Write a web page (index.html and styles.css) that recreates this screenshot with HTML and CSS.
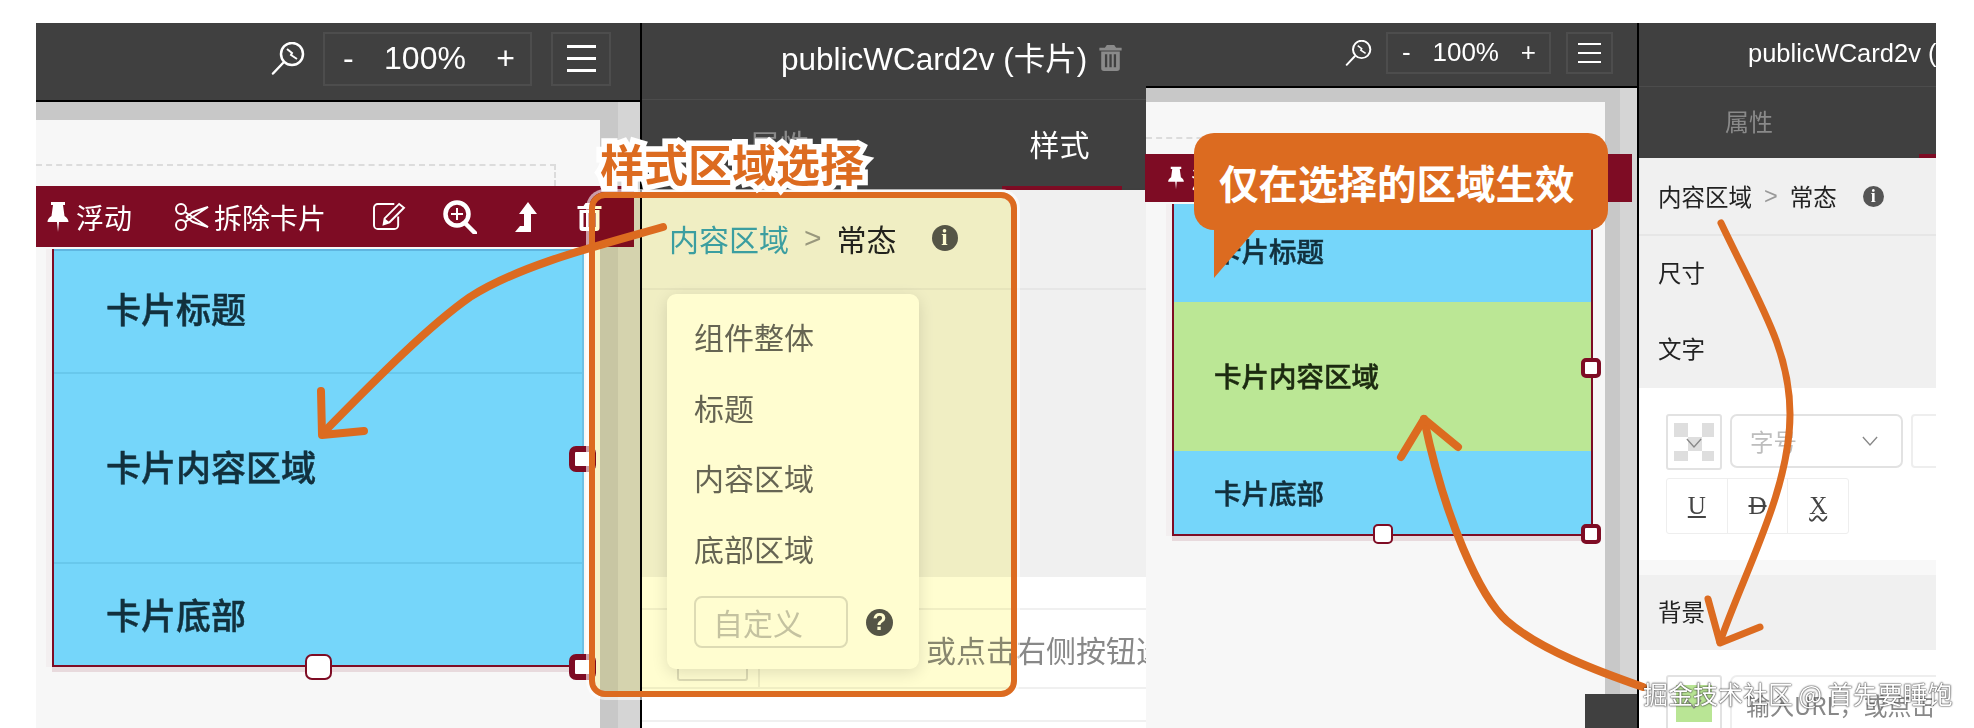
FILE: index.html
```html
<!DOCTYPE html>
<html lang="zh-CN">
<head>
    <meta charset="UTF-8">
    <title>publicWCard2v 样式区域选择</title>
    <link rel="stylesheet" href="styles.css">
</head>
<body>
    <svg class="defs" width="0" height="0">
        <symbol id="i-pin" viewBox="0 0 24 30"><path d="M5 0h14v3h-2l1.500 11c2.500 1.500 4 3.500 4 6H13l-1 10-1-10H1.500c0-2.500 1.500-4.500 4-6L7 3H5z" fill="currentColor"/></symbol>
        <symbol id="i-scissors" viewBox="0 0 36 30"><g fill="none" stroke="currentColor" stroke-width="2"><circle cx="8" cy="7" r="5"/><circle cx="8" cy="23" r="5"/><path d="M12 10l23 15-15-5-7-5M12 20l23-15-15 5-7 5"/></g></symbol>
        <symbol id="i-edit" viewBox="0 0 34 30"><path d="M23 2H6a4 4 0 0 0-4 4v18a4 4 0 0 0 4 4h17a4 4 0 0 0 4-4V15" fill="none" stroke="currentColor" stroke-width="2"/><path d="M28 2l5 4-15 15-6 2 1-6z" fill="none" stroke="currentColor" stroke-width="2"/><path d="M13 17l5 4-6 2z" fill="currentColor"/></symbol>
        <symbol id="i-zoom" viewBox="0 0 34 34"><circle cx="14" cy="14" r="11.500" fill="none" stroke="currentColor" stroke-width="4.500"/><path d="M14 8v12M8 14h12" stroke="currentColor" stroke-width="2"/><path d="M22 23l10 10" stroke="currentColor" stroke-width="4.500" stroke-linecap="round"/></symbol>
        <symbol id="i-up" viewBox="0 0 22 30"><path d="M13 0l9 12h-6v18H0l5-6h4V12H4z" fill="currentColor"/></symbol>
        <symbol id="i-trash" viewBox="0 0 24 28"><path fill-rule="evenodd" d="M8 0h8l2 3h6v3H0V3h6zM2 7h20v18a3 3 0 0 1-3 3H5a3 3 0 0 1-3-3zM6 10v14h2.500V10zM10.800 10v14h2.500V10zM15.500 10v14H18V10z" fill="currentColor"/></symbol>
        <symbol id="i-loupe" viewBox="0 0 34 33"><g fill="none" stroke="currentColor"><circle cx="21" cy="12" r="11" stroke-width="2.500"/><path d="M12 21L2 31.500" stroke-width="2.500" stroke-linecap="round"/><path d="M16 7l5 4-1 2 6 4" stroke-width="2"/></g></symbol>
        <symbol id="i-chevron" viewBox="0 0 18 12"><path d="M1 1l8 9 8-9" fill="none" stroke="currentColor" stroke-width="1.500"/></symbol>
    </svg>

    <div class="stage">
        <!-- first shot: whole card selected -->
        <section class="editor editor-a">
            <div class="topbar">
                <svg class="loupe"><use href="#i-loupe"/></svg>
                <div class="zoom-box"><span class="zoom-sign">-</span><span>100%</span><span class="zoom-sign">+</span></div>
                <div class="menu-box"><i></i><i></i><i></i></div>
            </div>
            <div class="workspace">
                <div class="page">
                    <div class="dash"></div>
                    <div class="toolbar">
                        <svg class="t-pin"><use href="#i-pin"/></svg><span class="t-label">浮动</span>
                        <svg class="t-scissors"><use href="#i-scissors"/></svg><span class="t-label">拆除卡片</span>
                        <svg class="t-edit"><use href="#i-edit"/></svg>
                        <svg class="t-zoom"><use href="#i-zoom"/></svg>
                        <svg class="t-up"><use href="#i-up"/></svg>
                        <svg class="t-trash"><use href="#i-trash"/></svg>
                    </div>
                    <div class="card">
                        <div class="card-row row-head">卡片标题</div>
                        <div class="card-row row-body">卡片内容区域</div>
                        <div class="card-row row-foot">卡片底部</div>
                        <span class="handle handle-side"></span>
                        <span class="handle handle-mid"></span>
                        <span class="handle handle-corner"></span>
                    </div>
                </div>
            </div>
        </section>

        <section class="panel panel-a">
            <div class="panel-title">publicWCard2v (卡片)<svg class="title-trash"><use href="#i-trash"/></svg></div>
            <div class="tabs"><span class="tab">属性</span><span class="tab tab-on">样式</span></div>
            <div class="crumbs">
                <span class="crumb-link">内容区域</span><span class="crumb-sep">&gt;</span><span>常态</span><span class="dot-icon dot-info">i</span>
            </div>
            <div class="panel-grey"></div>
            <div class="url-gap"></div>
            <div class="url-row">
                <div class="url-swatch"></div>
                <div class="url-input">输入URL，或点击右侧按钮选择图片</div>
            </div>
            <div class="url-row-end"></div>

            <div class="dropdown">
                <div class="drop-item">组件整体</div>
                <div class="drop-item">标题</div>
                <div class="drop-item">内容区域</div>
                <div class="drop-item">底部区域</div>
                <div class="drop-custom">
                    <div class="drop-input">自定义</div>
                    <span class="dot-icon dot-help">?</span>
                </div>
            </div>
        </section>

        <!-- second shot: only the content area changes -->
        <section class="editor editor-b">
            <div class="topbar">
                <svg class="loupe"><use href="#i-loupe"/></svg>
                <div class="zoom-box"><span class="zoom-sign">-</span><span>100%</span><span class="zoom-sign">+</span></div>
                <div class="menu-box"><i></i><i></i><i></i></div>
            </div>
            <div class="workspace">
                <div class="page">
                    <div class="dash"></div>
                    <div class="toolbar">
                        <svg class="t-pin"><use href="#i-pin"/></svg><span class="t-label">浮动</span>
                    </div>
                    <div class="card">
                        <div class="card-row row-head">卡片标题</div>
                        <div class="card-row row-body">卡片内容区域</div>
                        <div class="card-row row-foot">卡片底部</div>
                        <span class="handle handle-side"></span>
                        <span class="handle handle-mid"></span>
                        <span class="handle handle-corner"></span>
                    </div>
                </div>
                <div class="corner-block"></div>
            </div>
        </section>

        <section class="panel panel-b">
            <div class="panel-title">publicWCard2v (卡片)</div>
            <div class="tabs"><span class="tab">属性</span><span class="tab tab-on">样式</span></div>
            <div class="crumbs">
                <span>内容区域</span><span class="crumb-sep">&gt;</span><span>常态</span><span class="dot-icon dot-info">i</span>
            </div>
            <div class="prop-row">尺寸</div>
            <div class="prop-row">文字</div>
            <div class="text-controls">
                <div class="control-line">
                    <div class="swatch-box"><div class="checker"></div><svg class="chev"><use href="#i-chevron"/></svg></div>
                    <div class="size-select"><span>字号</span><svg class="chev"><use href="#i-chevron"/></svg></div>
                    <div class="next-box">字</div>
                </div>
                <div class="deco-group">
                    <span class="deco deco-u">U</span>
                    <span class="deco deco-d">D</span>
                    <span class="deco deco-x">X</span>
                </div>
            </div>
            <div class="prop-gap"></div>
            <div class="prop-row prop-bg">背景</div>
            <div class="bg-line">
                <div class="swatch-box"><div class="green-swatch"></div><svg class="chev"><use href="#i-chevron"/></svg></div>
                <div class="bg-input">输入URL，或点击右侧按钮选择图片</div>
            </div>
        </section>

        <!-- annotations drawn over the shots -->
        <div class="select-frame"></div>
        <svg class="arrows" viewBox="0 0 1974 728">
            <g fill="none" stroke="#dc6b20" stroke-linecap="round" stroke-linejoin="round">
                <g stroke-width="8">
                    <path d="M663 227C600 245 520 265 470 297C430 325 380 375 324 432"/>
                    <path d="M321 391L322 435L364 431"/>
                    <path d="M1643 687C1600 672 1540 650 1507 621C1480 597 1445 520 1424 419"/>
                    <path d="M1401 457L1424 419L1458 447"/>
                </g>
                <g stroke-width="7">
                    <path d="M1721 223C1760 305 1790 350 1790 414C1790 490 1745 570 1720 642"/>
                    <path d="M1708 599L1720 643L1760 627"/>
                </g>
            </g>
        </svg>
        <div class="select-label">样式区域选择</div>
        <div class="bubble">仅在选择的区域生效</div>
        <div class="watermark">掘金技术社区 @ 首先要睡饱</div>
    </div>
</body>
</html>
```

FILE: styles.css
```css
* {
    box-sizing: border-box;
}
body {
    margin: 0;
    background: #fff;
    font-family: "Liberation Sans", "Noto Sans CJK SC", sans-serif;
}
.defs {
    position: absolute;
}
.stage {
    position: relative;
    display: flex;
    width: 1974px;
    height: 728px;
    padding: 23px 0 0 36px;
    overflow: hidden;
    background: #fff;
}

/* editor shots */
.editor {
    display: flex;
    flex-direction: column;
    flex: none;
    border-right: 2px solid #000;
}
.editor-a {
    width: 606px;
}
.editor-b {
    width: 493px;
}
.topbar {
    display: flex;
    justify-content: flex-end;
    align-items: center;
    background: #404040;
    border-bottom: 2px solid #000;
    color: #fff;
}
.editor-a .topbar {
    height: 79px;
    padding-right: 29px;
    padding-bottom: 6px;
}
.editor-b .topbar {
    height: 65px;
    padding-right: 24px;
    padding-bottom: 4px;
}
.loupe {
    flex: none;
}
.editor-a .loupe {
    width: 34px;
    height: 33px;
    margin-right: 18px;
}
.editor-b .loupe {
    width: 27px;
    height: 26px;
    margin-right: 14px;
}
.zoom-box {
    display: flex;
    justify-content: space-between;
    align-items: center;
    border: 2px solid #4d4d4d;
}
.editor-a .zoom-box {
    width: 209px;
    height: 54px;
    padding: 0 15px 0 18px;
    font-size: 32px;
}
.editor-b .zoom-box {
    width: 165px;
    height: 42px;
    padding: 0 13px 0 14px;
    font-size: 26px;
}
.menu-box {
    display: flex;
    flex-direction: column;
    justify-content: center;
    align-items: center;
    border: 2px solid #4d4d4d;
}
.menu-box i {
    display: block;
    height: 2px;
    background: #fff;
}
.editor-a .menu-box {
    width: 60px;
    height: 54px;
    margin-left: 19px;
    gap: 9px;
}
.editor-a .menu-box i {
    width: 29px;
    height: 3px;
}
.editor-b .menu-box {
    width: 47px;
    height: 42px;
    margin-left: 15px;
    gap: 7px;
}
.editor-b .menu-box i {
    width: 23px;
}
.workspace {
    position: relative;
    flex: 1;
    min-height: 0;
    background: #c8c8c8;
}
.editor-a .workspace {
    padding-top: 18px;
    background: linear-gradient(to right, #c8c8c8 582px, #d5d5d5 582px);
}
.editor-b .workspace {
    padding-top: 14px;
    background: linear-gradient(to right, #c8c8c8 474px, #d5d5d5 474px);
}
.page {
    height: 100%;
    background: #f7f7f7;
}
.editor-a .page {
    width: 564px;
    padding-top: 44px;
}
.editor-b .page {
    width: 459px;
    padding-top: 35px;
}
.dash {
    border-top: 2px dashed #dcdcdc;
    border-right: 2px dashed #dcdcdc;
}
.editor-a .dash {
    width: 520px;
    height: 22px;
}
.editor-b .dash {
    width: 440px;
    height: 17px;
}
.toolbar {
    display: flex;
    align-items: center;
    background: #7e0c24;
    color: #fff;
    white-space: nowrap;
}
.editor-a .toolbar {
    width: 598px;
    height: 61px;
    padding-left: 10px;
}
.editor-b .toolbar {
    width: 487px;
    height: 48px;
    margin-left: -1px;
    padding-left: 22px;
}
.t-label {
    font-size: 28px;
    color: #fff;
}
.editor-b .t-label {
    font-size: 22px;
}
.t-pin {
    width: 24px;
    height: 30px;
    margin-right: 6px;
}
.editor-b .t-pin {
    width: 18px;
    height: 24px;
}
.t-scissors {
    width: 36px;
    height: 30px;
    margin: 0 5px 0 41px;
}
.t-edit {
    width: 35px;
    height: 29px;
    margin-left: 45px;
}
.t-zoom {
    width: 34px;
    height: 34px;
    margin-left: 37px;
}
.t-up {
    width: 22px;
    height: 30px;
    margin-left: 38px;
}
.t-trash {
    width: 27px;
    height: 28px;
    margin-left: 39px;
}

/* card with its three areas */
.card {
    position: relative;
    margin-top: 2px;
    border-left: 2px solid #7e0c24;
    border-bottom: 2px solid #7e0c24;
    border-right: 2px solid #6cc0e4;
    box-shadow: 0 5px 0 rgba(126, 12, 36, 0.12), -6px 0 0 rgba(126, 12, 36, 0.03);
    font-family: "Noto Sans CJK SC", sans-serif;
    font-weight: 500;
    color: #12303d;
    -webkit-text-stroke: 0.5px currentColor;
}
.editor-a .card {
    width: 532px;
    height: 418px;
    margin-left: 16px;
    font-size: 35px;
}
.editor-b .card {
    width: 421px;
    height: 332px;
    margin-left: 26px;
    border-right-color: #7e0c24;
    font-size: 27.500px;
}
.card-row {
    display: flex;
    align-items: center;
    background: #75d6fa;
}
.editor-a .card-row {
    padding-left: 52px;
    border-top: 2px solid #68c8ec;
}
.editor-b .card-row {
    padding-left: 40px;
}
.editor-a .row-head {
    height: 123px;
    padding-bottom: 8px;
    border-top-color: #5fb6e0;
}
.editor-a .row-body {
    height: 190px;
    padding-bottom: 6px;
}
.editor-a .row-foot {
    height: 103px;
    padding-bottom: 2px;
}
.editor-b .row-head {
    height: 98px;
    padding-bottom: 6px;
}
.editor-b .row-body {
    height: 149px;
    padding-bottom: 4px;
    background: #bbe795;
    color: #1c2a10;
}
.editor-b .row-foot {
    height: 83px;
    padding-bottom: 2px;
}
.handle {
    position: absolute;
    background: #fff;
    border-style: solid;
    border-color: #7e0c24;
}
.editor-a .handle {
    width: 27px;
    height: 26px;
    border-width: 6px;
    border-radius: 7px;
}
.editor-b .handle {
    width: 20px;
    height: 20px;
    border-width: 4.500px;
    border-radius: 5px;
}
.editor-a .handle-side {
    right: -14px;
    top: 197px;
}
.editor-a .handle-corner {
    right: -14px;
    bottom: -15px;
}
.editor-a .handle.handle-mid {
    left: 251px;
    bottom: -15px;
    border-width: 2px;
}
.editor-b .handle-side {
    right: -10px;
    top: 154px;
}
.editor-b .handle-corner {
    right: -10px;
    bottom: -10px;
}
.editor-b .handle.handle-mid {
    left: 199px;
    bottom: -10px;
    border-width: 2px;
}
.corner-block {
    position: absolute;
    right: 0;
    bottom: 0;
    width: 52px;
    height: 34px;
    background: #404040;
}

/* property panels */
.panel {
    position: relative;
    display: flex;
    flex-direction: column;
    flex: none;
    overflow: hidden;
    font-family: "Noto Sans CJK SC", sans-serif;
    background: #fff;
}
.panel-a {
    width: 504px;
    height: 705px;
}
.panel-b {
    width: 297px;
    height: 705px;
}
.panel-title {
    display: flex;
    align-items: center;
    flex: none;
    background: #404040;
    border-bottom: 1px solid #4c4c4c;
    color: #fff;
    white-space: nowrap;
    font-family: "Liberation Sans", "Noto Sans CJK SC", sans-serif;
}
.panel-a .panel-title {
    height: 77px;
    padding: 0 0 10px 139px;
    font-size: 31.500px;
}
.panel-b .panel-title {
    height: 64px;
    padding: 0 0 8px 109px;
    font-size: 25.500px;
}
.title-trash {
    width: 23px;
    height: 26px;
    margin: 3px 0 0 12px;
    color: #8a8a8a;
}
.tabs {
    display: flex;
    flex: none;
    background: #404040;
    color: #8a8a8a;
}
.panel-a .tabs {
    height: 90px;
    padding-left: 80px;
    gap: 160px;
    font-size: 30px;
}
.panel-b .tabs {
    height: 71px;
    padding-left: 60px;
    gap: 120px;
    font-size: 24px;
}
.tab {
    display: flex;
    flex: none;
    justify-content: center;
    align-items: center;
    border-bottom: 4px solid transparent;
}
.panel-a .tab {
    width: 120px;
    padding-right: 5px;
}
.panel-b .tab {
    width: 100px;
}
.tab-on {
    color: #fff;
    border-bottom-color: #7e0c24;
}
.crumbs {
    display: flex;
    align-items: center;
    flex: none;
    background: #f0f0f0;
    border-bottom: 2px solid #e6e6e6;
    box-shadow: 0 2px 6px rgba(0, 0, 0, 0.05);
    color: #222;
}
.panel-a .crumbs {
    height: 100px;
    padding: 0 0 2px 27px;
    font-size: 30px;
}
.panel-b .crumbs {
    height: 78px;
    padding-left: 19px;
    font-size: 23.500px;
}
.crumb-link {
    color: #3b9fc4;
}
.crumb-sep {
    color: #999;
    font-family: "Liberation Sans", sans-serif;
}
.panel-a .crumb-sep {
    margin: 0 15px;
}
.panel-b .crumb-sep {
    margin: 0 12px;
}
.dot-icon {
    display: flex;
    justify-content: center;
    align-items: center;
    flex: none;
    border-radius: 50%;
    background: #555;
    color: #fff;
    font-weight: bold;
}
.dot-info {
    font-family: "Liberation Serif", serif;
}
.panel-a .dot-info {
    width: 26px;
    height: 26px;
    margin-left: 35px;
    font-size: 23px;
}
.panel-b .dot-info {
    width: 21px;
    height: 21px;
    margin-left: 26px;
    font-size: 18px;
}
.panel-grey {
    flex: none;
    height: 287px;
    background: #f0f0f0;
}
.url-gap {
    flex: none;
    height: 33px;
    border-bottom: 2px solid #f0f0f0;
}
.url-row {
    display: flex;
    flex: none;
    height: 79px;
    padding-left: 35px;
    border-bottom: 2px solid #f0f0f0;
}
.url-swatch {
    flex: none;
    width: 71px;
    height: 56px;
    margin-top: 15px;
    border: 2px solid #ddd;
    border-radius: 3px;
}
.url-input {
    display: flex;
    align-items: center;
    flex: none;
    margin-left: 10px;
    padding: 0 0 0 19px;
    border-left: 2px solid #eee;
    font-size: 30px;
    color: #888;
    white-space: nowrap;
}
.url-row-end {
    flex: none;
    height: 33px;
    border-bottom: 2px solid #f0f0f0;
}
.dropdown {
    position: absolute;
    left: 25px;
    top: 271px;
    width: 252px;
    height: 375px;
    padding: 7px 0 0 27px;
    border-radius: 9px;
    background: #fff;
    box-shadow: 0 4px 16px rgba(0, 0, 0, 0.12);
}
.drop-item {
    display: flex;
    align-items: center;
    height: 70.500px;
    font-size: 30px;
    color: #666;
}
.drop-custom {
    display: flex;
    align-items: center;
    margin-top: 13px;
}
.drop-input {
    display: flex;
    align-items: center;
    width: 154px;
    height: 52px;
    padding-left: 17px;
    border: 2px solid #ddd;
    border-radius: 8px;
    font-size: 30px;
    color: #c4c4c4;
}
.dot-help {
    width: 27px;
    height: 27px;
    margin-left: 18px;
    font-family: "Liberation Sans", sans-serif;
    font-size: 23px;
}
.prop-row {
    display: flex;
    align-items: center;
    flex: none;
    height: 76px;
    padding: 0 0 4px 19px;
    background: #f0f0f0;
    font-size: 23.500px;
    color: #222;
}
.text-controls {
    flex: none;
    height: 172px;
    padding: 26px 0 0 27px;
    background: #fff;
}
.control-line {
    display: flex;
    gap: 8px;
}
.swatch-box {
    position: relative;
    flex: none;
    width: 56px;
    height: 56px;
    border: 2px solid #e2e2e2;
    border-radius: 3px;
    color: #888;
}
.checker {
    position: absolute;
    inset: 7px 6px;
    background: repeating-conic-gradient(#dedede 0 25%, transparent 0 50%) 14px 0 / 28px 28px;
}
.chev {
    width: 16px;
    height: 11px;
    color: #888;
}
.swatch-box .chev {
    position: absolute;
    left: 18px;
    top: 22px;
}
.size-select {
    display: flex;
    justify-content: space-between;
    align-items: center;
    flex: none;
    width: 173px;
    height: 54px;
    padding: 0 23px 0 18px;
    border: 2px solid #e2e2e2;
    border-radius: 7px;
    font-size: 23.500px;
    color: #bdbdbd;
}
.next-box {
    display: flex;
    align-items: center;
    flex: none;
    width: 60px;
    height: 54px;
    padding-left: 22px;
    border: 2px solid #eee;
    border-radius: 4px;
    font-size: 20px;
    color: #999;
}
.deco-group {
    display: flex;
    width: 183px;
    height: 56px;
    margin-top: 8px;
    border: 1px solid #eee;
    border-radius: 3px;
}
.deco {
    display: flex;
    flex: 1;
    justify-content: center;
    align-items: center;
    font-family: "Liberation Serif", serif;
    font-size: 25px;
    color: #444;
}
.deco + .deco {
    border-left: 1px solid #eee;
}
.deco-u {
    text-decoration: underline;
}
.deco-d {
    text-decoration: line-through;
}
.deco-x {
    text-decoration: underline wavy;
    text-decoration-thickness: 2px;
}
.prop-gap {
    flex: none;
    height: 15px;
    background: #f8f8f8;
}
.prop-bg {
    height: 75px;
}
.bg-line {
    display: flex;
    flex: 1;
    gap: 8px;
    padding: 25px 0 0 27px;
}
.green-swatch {
    position: absolute;
    inset: 8px 8px auto;
    height: 37px;
    background: #b9e595;
}
.bg-input {
    flex: none;
    width: 300px;
    height: 70px;
    padding: 10px 0 0 14px;
    border: 2px solid #eee;
    border-radius: 7px;
    font-size: 24px;
    color: #888;
    white-space: nowrap;
}

/* annotations */
.select-frame {
    position: absolute;
    left: 589px;
    top: 192px;
    width: 428px;
    height: 505px;
    border: 6px solid #dc6b20;
    border-radius: 16px;
    box-shadow: 0 0 0 3px rgba(255, 255, 255, 0.6);
}
.select-frame::before {
    content: "";
    position: absolute;
    inset: 0;
    border-radius: 10px;
    background: #fffdd0;
    mix-blend-mode: multiply;
}
.arrows {
    position: absolute;
    left: 0;
    top: 0;
    width: 1974px;
    height: 728px;
}
.select-label {
    position: absolute;
    left: 600px;
    top: 131px;
    font-family: "Noto Sans CJK SC", sans-serif;
    font-size: 44px;
    font-weight: bold;
    line-height: 64px;
    color: #dc6b20;
    white-space: nowrap;
    -webkit-text-stroke: 11px #fff;
    paint-order: stroke fill;
}
.bubble {
    position: absolute;
    left: 1194px;
    top: 133px;
    width: 414px;
    height: 97px;
    padding: 0 0 0 25px;
    border-radius: 20px;
    background: #dc6b20;
    font-family: "Noto Sans CJK SC", sans-serif;
    font-size: 39.500px;
    font-weight: bold;
    line-height: 98px;
    color: #fff;
    white-space: nowrap;
}
.bubble::after {
    content: "";
    position: absolute;
    left: 20px;
    top: 96px;
    width: 42px;
    height: 49px;
    background: #dc6b20;
    clip-path: polygon(0 0, 100% 0, 0 100%);
}
.watermark {
    position: absolute;
    left: 1643px;
    top: 675px;
    font-family: "Noto Sans CJK SC", sans-serif;
    font-size: 25px;
    line-height: 36px;
    color: #fff;
    white-space: nowrap;
    text-shadow: 0 0 2px #222, 0 0 1px #222;
}
```
